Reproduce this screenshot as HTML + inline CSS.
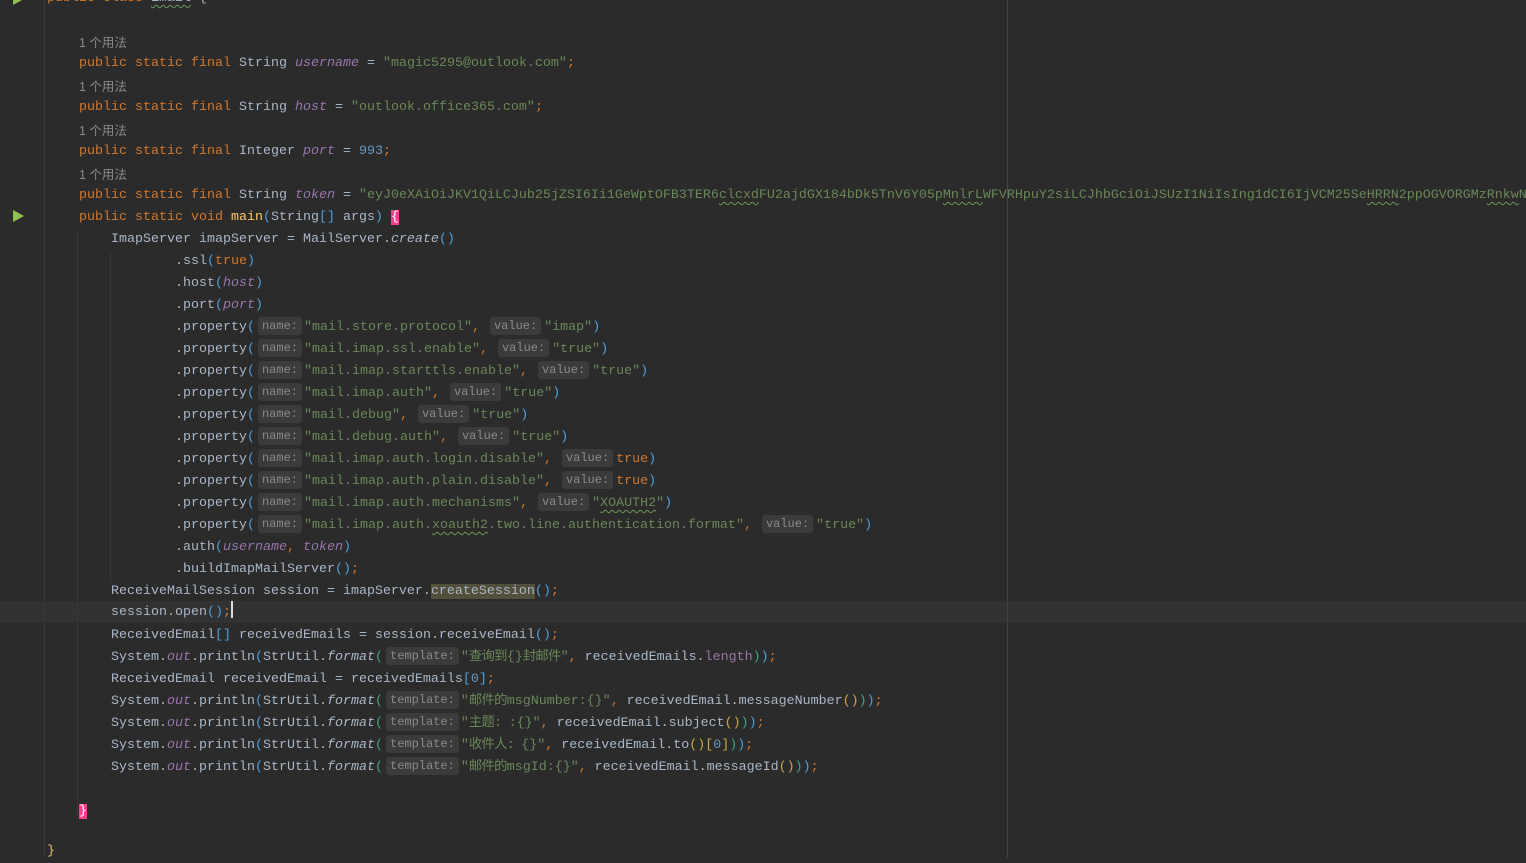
<!DOCTYPE html>
<html><head><meta charset="utf-8">
<style>
html,body{margin:0;padding:0;}
body{width:1526px;height:858px;background:#2b2b2b;position:relative;overflow:hidden;
font-family:"Liberation Mono","Noto Sans CJK SC",monospace;font-size:13.33px;color:#a9b7c6;}
.l{position:absolute;height:22px;line-height:22px;white-space:pre;}
.k{color:#cc7832}.s{color:#6a8759}.f{color:#9876aa;font-style:italic}.n{color:#6897bb}
.m{color:#ffc66d}.b1{color:#4e9fdc}.b2{color:#3fa58e}.b3{color:#c9a846}.it{font-style:italic}
.h{display:inline-block;background:#3b3b3b;color:#8a8a8a;font-size:12px;line-height:18px;height:18px;padding:0 4px;margin:0 2px 0 3px;border-radius:3px;vertical-align:1px;}
.hv{margin-left:2px;margin-right:3px}
.c{letter-spacing:-0.7px}
.u{font-family:"Liberation Sans","Noto Sans CJK SC",sans-serif;color:#8a8a8a;font-size:12.5px}
.w{text-decoration:underline wavy #6a9955;text-underline-offset:3px;text-decoration-thickness:1px}
.cur{position:absolute;left:0;top:601px;width:1526px;height:22px;background:#323232}
.vl{position:absolute;width:1px;background:#3d3d3d}
</style></head><body>
<div class="cur"></div>
<div class="vl" style="left:44px;top:0;height:858px;background:#393939"></div>
<div class="vl" style="left:1007px;top:0;height:858px;background:#444"></div>
<div class="vl" style="left:77px;top:230px;height:590px;background:#383838"></div>
<div class="vl" style="left:110px;top:252px;height:330px;background:#383838"></div>
<svg style="position:absolute;left:12px;top:209px" width="13" height="14"><polygon points="1,1 12,7 1,13" fill="#8bc34a"/></svg>
<svg style="position:absolute;left:12px;top:-8px" width="13" height="14"><polygon points="1,1 12,7 1,13" fill="#8bc34a"/></svg>

<div class="l" style="left:47px;top:-12px"><span class="k">public class </span><span class="w">Email</span> {</div>

<div class="l u" style="left:79px;top:32px">1 个用法</div>
<div class="l" style="left:79px;top:53px"><span class="k">public static final </span>String <span class="f">username</span> = <span class="s">"magic5295@outlook.com"</span><span class="k">;</span></div>
<div class="l u" style="left:79px;top:76px">1 个用法</div>
<div class="l" style="left:79px;top:97px"><span class="k">public static final </span>String <span class="f">host</span> = <span class="s">"outlook.office365.com"</span><span class="k">;</span></div>
<div class="l u" style="left:79px;top:120px">1 个用法</div>
<div class="l" style="left:79px;top:141px"><span class="k">public static final </span>Integer <span class="f">port</span> = <span class="n">993</span><span class="k">;</span></div>
<div class="l u" style="left:79px;top:164px">1 个用法</div>
<div class="l" style="left:79px;top:185px"><span class="k">public static final </span>String <span class="f">token</span> = <span class="s">"eyJ0eXAiOiJKV1QiLCJub25jZSI6Ii1GeWptOFB3TER6<span class="w">clcxd</span>FU2ajdGX184bDk5TnV6Y05p<span class="w">MnlrL</span>WFVRHpuY2siLCJhbGciOiJSUzI1NiIsIng1dCI6IjVCM25Se<span class="w">HRRN</span>2ppOGVORGMz<span class="w">Rnkw</span>N"</span></div>
<div class="l" style="left:79px;top:207px"><span class="k">public static void </span><span class="m">main</span><span class="b1">(</span>String<span class="b1">[]</span> args<span class="b1">)</span> <span style="background:#ff3d8f;color:#fff">{</span></div>
<div class="l" style="left:111px;top:229px">ImapServer imapServer = MailServer.<span class="it">create</span><span class="b1">()</span></div>
<div class="l" style="left:175px;top:251px">.ssl<span class="b1">(</span><span class="k">true</span><span class="b1">)</span></div>
<div class="l" style="left:175px;top:273px">.host<span class="b1">(</span><span class="f">host</span><span class="b1">)</span></div>
<div class="l" style="left:175px;top:295px">.port<span class="b1">(</span><span class="f">port</span><span class="b1">)</span></div>
<div class="l" style="left:175px;top:317px">.property<span class="b1">(</span><span class="h">name:</span><span class="s">"mail.store.protocol"</span><span class="k">,</span> <span class="h hv">value:</span><span class="s">"imap"</span><span class="b1">)</span></div>
<div class="l" style="left:175px;top:339px">.property<span class="b1">(</span><span class="h">name:</span><span class="s">"mail.imap.ssl.enable"</span><span class="k">,</span> <span class="h hv">value:</span><span class="s">"true"</span><span class="b1">)</span></div>
<div class="l" style="left:175px;top:361px">.property<span class="b1">(</span><span class="h">name:</span><span class="s">"mail.imap.starttls.enable"</span><span class="k">,</span> <span class="h hv">value:</span><span class="s">"true"</span><span class="b1">)</span></div>
<div class="l" style="left:175px;top:383px">.property<span class="b1">(</span><span class="h">name:</span><span class="s">"mail.imap.auth"</span><span class="k">,</span> <span class="h hv">value:</span><span class="s">"true"</span><span class="b1">)</span></div>
<div class="l" style="left:175px;top:405px">.property<span class="b1">(</span><span class="h">name:</span><span class="s">"mail.debug"</span><span class="k">,</span> <span class="h hv">value:</span><span class="s">"true"</span><span class="b1">)</span></div>
<div class="l" style="left:175px;top:427px">.property<span class="b1">(</span><span class="h">name:</span><span class="s">"mail.debug.auth"</span><span class="k">,</span> <span class="h hv">value:</span><span class="s">"true"</span><span class="b1">)</span></div>
<div class="l" style="left:175px;top:449px">.property<span class="b1">(</span><span class="h">name:</span><span class="s">"mail.imap.auth.login.disable"</span><span class="k">,</span> <span class="h hv">value:</span><span class="k">true</span><span class="b1">)</span></div>
<div class="l" style="left:175px;top:471px">.property<span class="b1">(</span><span class="h">name:</span><span class="s">"mail.imap.auth.plain.disable"</span><span class="k">,</span> <span class="h hv">value:</span><span class="k">true</span><span class="b1">)</span></div>
<div class="l" style="left:175px;top:493px">.property<span class="b1">(</span><span class="h">name:</span><span class="s">"mail.imap.auth.mechanisms"</span><span class="k">,</span> <span class="h hv">value:</span><span class="s">"<span class="w">XOAUTH2</span>"</span><span class="b1">)</span></div>
<div class="l" style="left:175px;top:515px">.property<span class="b1">(</span><span class="h">name:</span><span class="s">"mail.imap.auth.<span class="w">xoauth2</span>.two.line.authentication.format"</span><span class="k">,</span> <span class="h hv">value:</span><span class="s">"true"</span><span class="b1">)</span></div>
<div class="l" style="left:175px;top:537px">.auth<span class="b1">(</span><span class="f">username</span><span class="k">,</span> <span class="f">token</span><span class="b1">)</span></div>
<div class="l" style="left:175px;top:559px">.buildImapMailServer<span class="b1">()</span><span class="k">;</span></div>
<div class="l" style="left:111px;top:581px">ReceiveMailSession session = imapServer.<span style="background:#52503a">createSession</span><span class="b1">()</span><span class="k">;</span></div>
<div class="l" style="left:111px;top:601px">session.open<span class="b1">()</span><span class="k">;</span><span style="display:inline-block;width:2px;height:17px;background:#ddd;vertical-align:-3px"></span></div>
<div class="l" style="left:111px;top:625px">ReceivedEmail<span class="b1">[]</span> receivedEmails = session.receiveEmail<span class="b1">()</span><span class="k">;</span></div>
<div class="l" style="left:111px;top:647px">System.<span class="f">out</span>.println<span class="b1">(</span>StrUtil.<span class="it">format</span><span class="b2">(</span><span class="h">template:</span><span class="s">"<span class="c">查询到</span>{}<span class="c">封邮件</span>"</span><span class="k">,</span> receivedEmails.<span class="f" style="font-style:normal">length</span><span class="b2">)</span><span class="b1">)</span><span class="k">;</span></div>
<div class="l" style="left:111px;top:669px">ReceivedEmail receivedEmail = receivedEmails<span class="b1">[</span><span class="n">0</span><span class="b1">]</span><span class="k">;</span></div>
<div class="l" style="left:111px;top:691px">System.<span class="f">out</span>.println<span class="b1">(</span>StrUtil.<span class="it">format</span><span class="b2">(</span><span class="h">template:</span><span class="s">"<span class="c">邮件的</span>msgNumber:{}"</span><span class="k">,</span> receivedEmail.messageNumber<span class="b3">()</span><span class="b2">)</span><span class="b1">)</span><span class="k">;</span></div>
<div class="l" style="left:111px;top:713px">System.<span class="f">out</span>.println<span class="b1">(</span>StrUtil.<span class="it">format</span><span class="b2">(</span><span class="h">template:</span><span class="s">"<span class="c">主题: </span>:{}"</span><span class="k">,</span> receivedEmail.subject<span class="b3">()</span><span class="b2">)</span><span class="b1">)</span><span class="k">;</span></div>
<div class="l" style="left:111px;top:735px">System.<span class="f">out</span>.println<span class="b1">(</span>StrUtil.<span class="it">format</span><span class="b2">(</span><span class="h">template:</span><span class="s">"<span class="c">收件人: </span>{}"</span><span class="k">,</span> receivedEmail.to<span class="b3">()[</span><span class="n">0</span><span class="b3">]</span><span class="b2">)</span><span class="b1">)</span><span class="k">;</span></div>
<div class="l" style="left:111px;top:757px">System.<span class="f">out</span>.println<span class="b1">(</span>StrUtil.<span class="it">format</span><span class="b2">(</span><span class="h">template:</span><span class="s">"<span class="c">邮件的</span>msgId:{}"</span><span class="k">,</span> receivedEmail.messageId<span class="b3">()</span><span class="b2">)</span><span class="b1">)</span><span class="k">;</span></div>
<div class="l" style="left:79px;top:801px"><span style="background:#ff3d8f;color:#fff">}</span></div>
<div class="l" style="left:47px;top:841px"><span style="color:#e8bf6a">}</span></div>
</body></html>
